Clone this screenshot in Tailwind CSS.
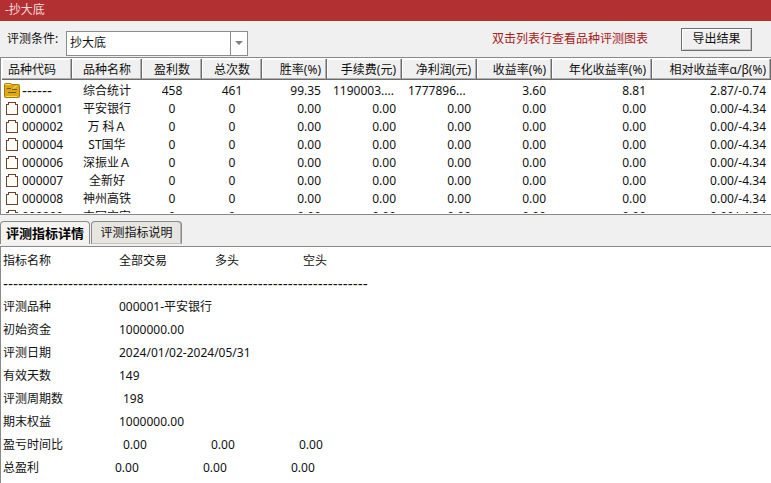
<!DOCTYPE html>
<html lang="zh-CN">
<head>
  <meta charset="utf-8">
  <title>抄大底</title>
  <script src="https://cdn.jsdelivr.net/npm/@tailwindcss/browser@4"></script>
</head>
<body class="bg-[#f0f0f0]">

  <div class="h-dvh flex flex-col overflow-hidden text-[12px] leading-[18px] text-[#111] font-['Noto_Sans','Noto_Sans_CJK_SC',sans-serif]">

    <header class="h-[21px] shrink-0 bg-[#b33032] text-[#f3dcdc] pl-[5px] pt-px">-抄大底</header>

    <div class="h-9 shrink-0 flex items-center pl-[7px] pr-[19px]">
      <label for="condition" class="w-[59px] pb-px">评测条件:</label>
      <div class="relative mt-2">
        <select id="condition" class="block w-[182px] h-[25px] pl-[3px] appearance-none rounded-none border border-[#8c8c8c] bg-white outline-none">
          <option>抄大底</option>
        </select>
        <span class="absolute right-px inset-y-px w-[17px] border-l border-[#8c8c8c] flex items-center justify-center pointer-events-none">
          <svg width="8" height="4" viewBox="0 0 8 4" fill="#808080"><path d="M0 0h8L4 4z"/></svg>
        </span>
      </div>
      <p class="ml-auto text-[#a8201c]">双击列表行查看品种评测图表</p>
      <button id="export" class="ml-[33px] w-[71px] h-[23px] border border-[#6e6e6e] bg-[#f0f0f0] shadow-[inset_1px_1px_0_#fff,inset_-1px_-1px_0_#c8c8c8] leading-[18px]">导出结果</button>
    </div>

    <div class="shrink-0 border-y border-l border-[#8a8a8a] bg-white pl-px py-px">
      <div class="h-[154px] overflow-hidden">
        <table class="w-full table-fixed border-collapse [&_td]:h-[18px] [&_td]:whitespace-nowrap">
          <colgroup>
            <col class="w-[70px]"><col class="w-[70px]"><col class="w-[60px]"><col class="w-[60px]"><col class="w-[65px]">
            <col class="w-[75px]"><col class="w-[75px]"><col class="w-[75px]"><col class="w-[100px]"><col>
          </colgroup>
          <thead>
            <tr class="bg-[#f0f0f0] [&_th]:h-[21px] [&_th]:p-0 [&_th]:font-normal [&_th]:whitespace-nowrap [&_th]:shadow-[inset_-1px_-1px_0_#6b6b6b,inset_-2px_-2px_0_#b0b0b0,inset_1px_1px_0_#fff]">
              <th class="text-left"><span class="pl-[6px]">品种代码</span></th>
              <th>品种名称</th>
              <th>盈利数</th>
              <th>总次数</th>
              <th class="text-right"><span class="pr-[6px]">胜率(%)</span></th>
              <th class="text-right"><span class="pr-[6px]">手续费(元)</span></th>
              <th class="text-right"><span class="pr-[6px]">净利润(元)</span></th>
              <th class="text-right"><span class="pr-[6px]">收益率(%)</span></th>
              <th class="text-right"><span class="pr-[6px]">年化收益率(%)</span></th>
              <th class="text-right"><span class="pr-[5px]">相对收益率α/β(%)</span></th>
            </tr>
          </thead>
          <tbody id="rows">
            <tr class="[&_td]:pt-[2px]">
              <td>
                <div class="flex items-center gap-[2px] pl-[2px]">
                  <svg width="16" height="16" viewBox="0 0 16 16">
                    <path d="M.5 1.500q0-1 1-1h5l1.500 1h6.500q1 0 1 1v11q0 1-1 1h-13q-1 0-1-1z" fill="#dca915" stroke="#a87c0c"/>
                    <path d="M1.500 1.500h5M9 5.500l4-3M2 13.500h11" stroke="#f7dc6a"/>
                    <path d="M3 5.500h4M8 6.500h5M4 9.500h8" stroke="#7a5600"/>
                  </svg>
                  <span class="font-['Liberation_Sans',sans-serif] text-[15px] leading-[18px]">------</span>
                </div>
              </td>
              <td class="text-center">综合统计</td>
              <td class="text-center">458</td>
              <td class="text-center">461</td>
              <td class="text-right"><span class="pr-[6px]">99.35</span></td>
              <td><span class="pl-[6px]">1190003....</span></td>
              <td><span class="pl-[6px]">1777896...</span></td>
              <td class="text-right"><span class="pr-[6px]">3.60</span></td>
              <td class="text-right"><span class="pr-[6px]">8.81</span></td>
              <td class="text-right"><span class="pr-[5px]">2.87/-0.74</span></td>
            </tr>
          </tbody>
        </table>
      </div>
    </div>

    <div class="h-[31px] shrink-0 flex items-start pt-[6px]" role="tablist">
      <button role="tab" aria-selected="true" class="w-[90px] h-[23px] rounded-t-[4px] border border-b-0 border-[#8a8a8a] bg-[#f4f3f0] text-[13px] leading-[18px] font-bold text-black">评测指标详情</button>
      <button role="tab" aria-selected="false" class="ml-px w-[91px] h-[23px] rounded-t-[4px] border border-[#8a8a8a] border-b-[#c4c4c0] bg-[#e6e5e0] shadow-[inset_-1px_0_0_#b5b5b0]">评测指标说明</button>
    </div>

    <div class="flex-1 overflow-hidden border-t border-l border-[#8a8a8a] bg-white pl-[2px] pt-[2px]">
      <table class="table-fixed w-[376px] leading-[23px] [&_td]:p-0 [&_th]:p-0 [&_th]:font-normal [&_th]:text-left">
        <colgroup><col class="w-[112px]"><col class="w-[88px]"><col class="w-[88px]"><col class="w-[88px]"></colgroup>
        <tbody>
          <tr><th>指标名称</th><th><span class="pl-1">全部交易</span></th><th><span class="pl-3">多头</span></th><th><span class="pl-3">空头</span></th></tr>
          <tr><td colspan="4" class="h-[23px] leading-[18px] whitespace-nowrap font-['Liberation_Sans',sans-serif] text-[15px]">-------------------------------------------------------------------------</td></tr>
          <tr><th>评测品种</th><td colspan="3"><span class="pl-1">000001-平安银行</span></td></tr>
          <tr><th>初始资金</th><td colspan="3"><span class="pl-1">1000000.00</span></td></tr>
          <tr><th>评测日期</th><td colspan="3"><span class="pl-1">2024/01/02-2024/05/31</span></td></tr>
          <tr><th>有效天数</th><td colspan="3"><span class="pl-1">149</span></td></tr>
          <tr><th>评测周期数</th><td colspan="3"><span class="pl-2">198</span></td></tr>
          <tr><th>期末权益</th><td colspan="3"><span class="pl-1">1000000.00</span></td></tr>
          <tr><th>盈亏时间比</th><td><span class="pl-2">0.00</span></td><td><span class="pl-2">0.00</span></td><td><span class="pl-2">0.00</span></td></tr>
          <tr><th>总盈利</th><td>0.00</td><td>0.00</td><td>0.00</td></tr>
        </tbody>
      </table>
    </div>

  </div>

  <script>
    const stocks = [
      ['000001', '平安银行'],
      ['000002', '万 科Ａ'],
      ['000004', 'ST国华'],
      ['000006', '深振业Ａ'],
      ['000007', '全新好'],
      ['000008', '神州高铁'],
      ['000009', '中国宝安'],
    ];

    const icon = `<svg width="16" height="16" viewBox="0 0 16 16" fill="#fffdf8" stroke="#6b4230" shape-rendering="crispEdges">
      <path d="M2.500 3.500h2v-2h7v2h2v10h-11z"/></svg>`;
    const num = '<td class="text-right"><span class="pr-[6px]">0.00</span></td>';

    document.getElementById('rows').insertAdjacentHTML('beforeend', stocks.map(([code, name]) => `
      <tr>
        <td><div class="flex items-center gap-[2px] pl-[2px]">${icon}<span>${code}</span></div></td>
        <td class="text-center">${name}</td>
        <td class="text-center">0</td>
        <td class="text-center">0</td>
        ${num.repeat(5)}
        <td class="text-right"><span class="pr-[5px]">0.00/-4.34</span></td>
      </tr>`).join(''));
  </script>
</body>
</html>
